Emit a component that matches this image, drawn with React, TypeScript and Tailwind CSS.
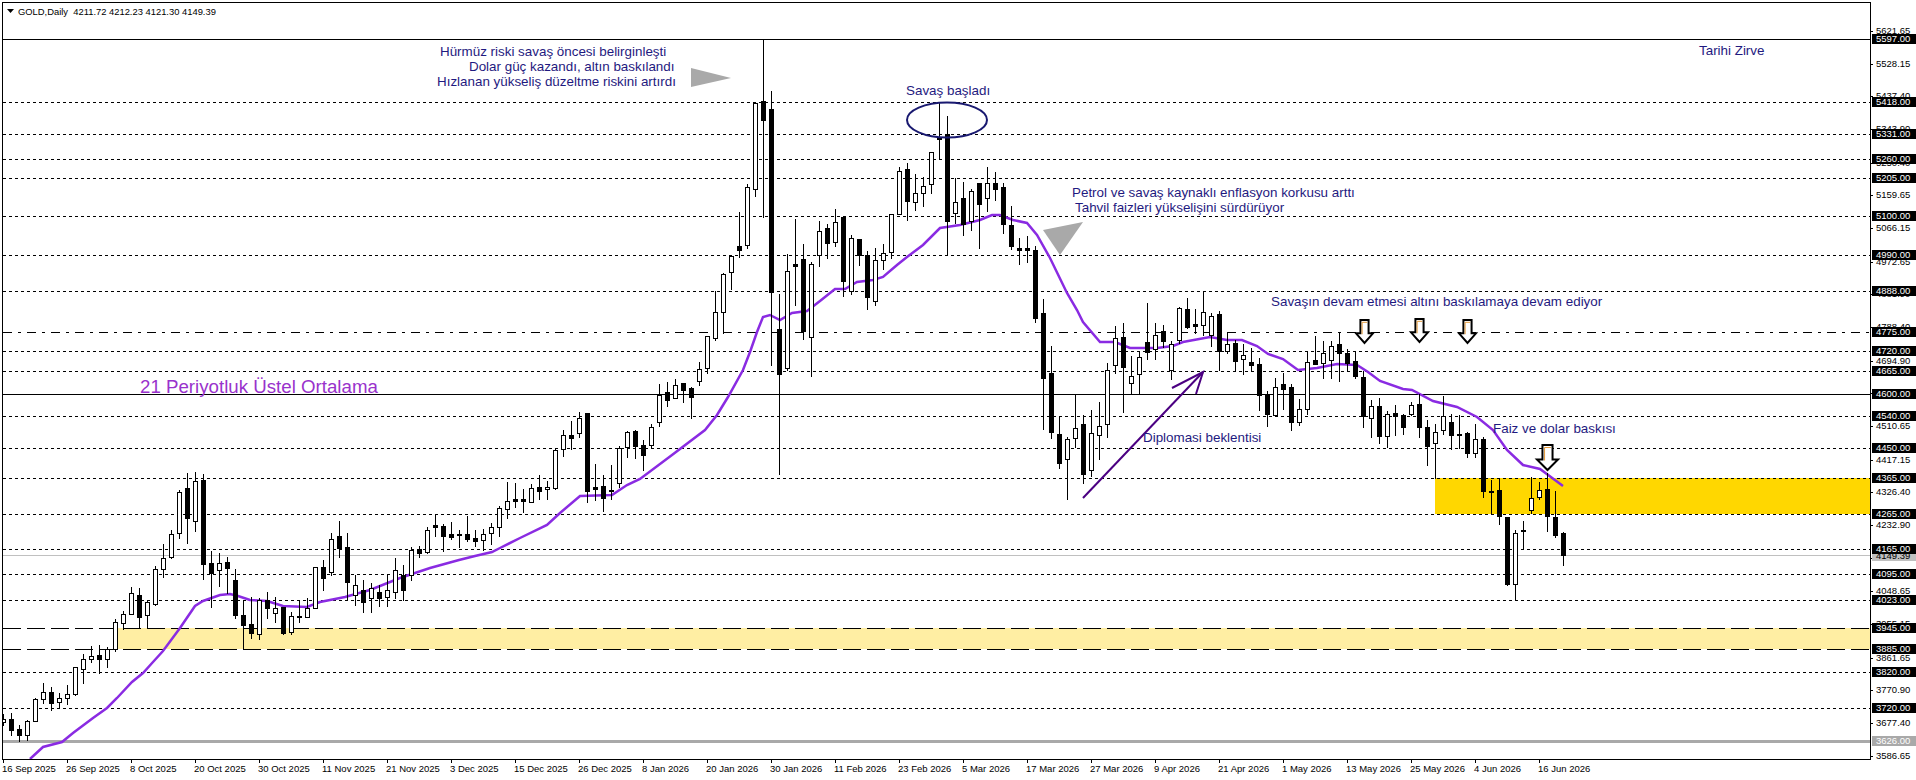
// GOLD daily chart, MT4 look. Everything in the svg is in page pixels.
const FONT = "font-['Liberation_Sans',Arial,sans-serif]";

// [white?, body top, body bottom, wick top, wick bottom]
const candles: number[][] = [
  [1,719,722,714,725],[0,719,730,713,735],[0,729,735,725,741],[1,721,735,720,740],[1,699,721,698,721],
  [1,692,699,683,703],[0,692,703,687,710],[1,698,702,693,708],[1,694,698,685,704],[1,667,694,667,695],
  [1,659,669,654,683],[1,656,659,646,662],[0,655,659,645,673],[1,649,659,647,667],[1,622,649,619,651],
  [1,614,623,611,629],[1,593,614,587,614],[0,595,617,588,628],[1,602,615,600,628],[1,569,604,566,605],
  [1,558,569,544,577],[1,534,557,530,558],[1,492,533,490,538],[0,488,518,473,543],[1,481,521,472,531],
  [0,480,564,474,579],[0,563,573,551,607],[1,563,570,553,586],[0,562,568,557,593],[0,580,615,569,618],
  [0,615,625,600,649],[0,624,633,597,638],[1,600,634,598,639],[0,600,608,592,618],[1,608,613,597,622],
  [0,607,633,607,634],[1,616,632,612,634],[0,616,617,600,622],[1,608,617,598,617],[1,567,608,567,608],
  [0,567,578,560,590],[1,539,572,533,575],[0,536,548,521,557],[0,547,582,533,600],[1,585,595,575,605],
  [0,590,602,580,612],[1,588,598,583,612],[0,592,598,585,606],[1,590,597,575,606],[1,570,592,558,598],
  [0,575,590,565,600],[1,550,575,547,580],[0,549,553,546,557],[1,530,552,527,553],[0,525,527,514,536],
  [0,526,536,524,551],[0,534,537,522,539],[0,534,535,530,547],[0,534,539,516,541],[0,538,541,530,546],
  [1,534,540,529,550],[1,527,533,523,544],[1,508,527,506,536],[1,501,509,482,518],[0,499,501,483,507],
  [0,499,501,489,512],[1,488,502,484,502],[0,487,491,475,499],[1,487,489,481,499],[1,450,488,448,489],
  [1,435,449,430,456],[0,435,438,421,449],[1,418,433,412,437],[0,413,491,413,502],[0,487,489,464,500],
  [0,486,498,475,511],[0,490,491,465,499],[1,448,483,446,487],[1,432,447,431,457],[0,431,446,430,458],
  [0,445,455,440,470],[1,427,445,424,448],[1,395,422,384,426],[0,392,400,382,406],[1,385,398,379,398],
  [0,383,390,383,402],[0,388,397,387,418],[1,369,381,362,385],[1,336,368,336,373],[1,312,338,291,340],
  [1,274,312,273,333],[1,256,272,255,289],[0,246,250,212,257],[1,187,245,184,248],[1,103,189,102,196],
  [0,101,120,39,217],[0,109,292,91,365],[0,329,374,294,474],[1,271,368,254,370],[0,264,266,219,305],
  [0,259,331,244,339],[1,264,337,262,376],[1,231,255,221,266],[0,228,243,224,258],[1,222,242,209,246],
  [0,217,281,217,296],[1,238,291,235,294],[0,239,255,239,265],[0,255,297,251,309],[1,260,301,248,305],
  [1,253,260,244,269],[1,214,252,214,258],[1,171,214,167,214],[0,169,201,163,220],[1,193,202,174,210],
  [1,186,193,177,206],[1,152,184,152,193],[0,137,139,103,159],[0,134,221,116,254],[1,202,213,178,223],
  [0,198,224,182,235],[1,191,221,189,230],[0,183,204,183,248],[1,183,198,167,211],[0,183,189,172,200],
  [0,187,224,183,233],[0,225,246,206,249],[0,248,250,238,264],[0,248,250,236,262],[0,250,318,246,322],
  [0,313,378,299,429],[0,373,432,346,438],[0,434,463,416,468],[1,439,459,437,499],[1,428,438,395,447],
  [0,424,474,415,483],[1,433,470,410,476],[1,426,435,402,459],[1,370,424,363,437],[1,338,365,326,373],
  [0,337,367,323,412],[1,376,383,356,394],[1,357,374,351,393],[0,342,352,303,359],[1,335,349,323,359],
  [0,331,341,325,347],[1,344,370,341,379],[1,308,340,307,343],[0,309,327,298,328],[0,324,326,309,333],
  [1,312,325,291,335],[1,316,335,313,346],[0,314,351,311,370],[1,344,351,332,353],[0,343,361,340,371],
  [1,355,359,344,374],[0,362,365,348,371],[0,364,395,358,410],[0,394,414,391,426],[1,387,415,378,416],
  [0,384,389,373,409],[0,387,422,384,430],[1,409,422,399,425],[1,362,409,351,414],[0,360,364,336,364],
  [1,353,363,341,378],[1,346,360,341,378],[0,344,353,332,381],[0,353,363,349,371],[0,361,376,351,378],
  [0,377,416,371,427],[1,406,418,400,437],[0,406,436,398,443],[1,414,436,411,447],[0,413,416,405,435],
  [0,415,427,414,434],[1,405,414,402,415],[0,404,427,394,437],[0,427,446,420,465],[1,432,443,424,478],
  [1,416,430,396,434],[0,422,435,414,449],[0,434,435,415,448],[0,433,453,432,457],[1,439,453,424,457],
  [0,439,491,437,497],[0,491,492,480,513],[0,490,516,479,524],[0,517,584,517,585],[1,533,584,530,600],
  [0,530,531,521,549],[1,498,510,477,513],[1,490,497,482,499],[0,489,516,473,531],[0,517,535,491,537],
  [0,533,555,532,565],
];

const ema =
  "30,759 43,747 62,742 73,733 93,718 107,708 117,698 132,682 143,673 153,662 163,651 180,628 195,606 203,601 220,595 230,594 238,596 250,600 267,601 283,606 307,607 320,602 345,597 370,590 400,578 430,568 459,560 475,556 492,552 500,548 520,538 547,525 560,513 580,496 612,495 627,485 640,479 672,455 705,430 717,415 728,397 743,370 750,352 757,332 763,317 770,315 780,320 792,313 807,311 820,301 835,289 845,289 857,282 873,280 883,277 897,265 907,257 923,245 940,228 960,225 980,220 992,215 1000,215 1013,220 1027,223 1037,235 1050,258 1067,293 1077,310 1083,322 1100,342 1115,342 1130,348 1157,348 1173,346 1183,342 1210,337 1227,340 1242,340 1257,346 1268,354 1283,359 1298,370 1317,368 1337,364 1357,365 1368,372 1380,381 1403,389 1412,390 1433,401 1457,407 1477,417 1493,430 1507,450 1523,465 1540,469 1563,486";

// price level lines: y, dash pattern
const levels: [number, string][] = [
  [102, "3 3"], [134, "3 3"], [159, "3 3"], [178, "3 3"], [216, "3 3"], [255, "3 3"], [291, "3 3"],
  [332, "9 6 3 6"], [351, "3 3"], [371, "3 3"], [416, "3 3"], [448, "3 3"], [478, "3 3"], [514, "3 3"],
  [549, "3 3"], [574, "3 3"], [600, "3 3"], [628, "18 6"], [649, "18 6"], [672, "3 3"], [708, "3 3"],
];

// right axis, plain scale values first so the level boxes sit on top of them
const scale: [string, number][] = [
  ["5621.65", 31], ["5528.15", 64], ["5437.40", 96], ["5343.90", 129], ["5250.40", 163], ["5159.65", 195],
  ["5066.15", 228], ["4972.65", 262], ["4881.90", 294], ["4788.40", 327], ["4694.90", 361], ["4604.15", 393],
  ["4510.65", 426], ["4417.15", 460], ["4326.40", 492], ["4232.90", 525], ["4142.15", 558], ["4048.65", 591],
  ["3955.15", 624], ["3861.65", 658], ["3770.90", 690], ["3677.40", 723], ["3586.65", 756],
];
const boxes: [string, number][] = [
  ["5597.00", 39], ["5418.00", 102], ["5331.00", 134], ["5260.00", 159], ["5205.00", 178], ["5100.00", 216],
  ["4990.00", 255], ["4888.00", 291], ["4775.00", 332], ["4720.00", 351], ["4665.00", 371], ["4600.00", 394],
  ["4540.00", 416], ["4450.00", 448], ["4365.00", 478], ["4265.00", 514], ["4165.00", 549], ["4095.00", 574],
  ["4023.00", 600], ["3945.00", 628], ["3885.00", 649], ["3820.00", 672], ["3720.00", 708],
];

const dates = [
  "16 Sep 2025", "26 Sep 2025", "8 Oct 2025", "20 Oct 2025", "30 Oct 2025", "11 Nov 2025", "21 Nov 2025",
  "3 Dec 2025", "15 Dec 2025", "26 Dec 2025", "8 Jan 2026", "20 Jan 2026", "30 Jan 2026", "11 Feb 2026",
  "23 Feb 2026", "5 Mar 2026", "17 Mar 2026", "27 Mar 2026", "9 Apr 2026", "21 Apr 2026", "1 May 2026",
  "13 May 2026", "25 May 2026", "4 Jun 2026", "16 Jun 2026",
];

// text notes on the chart: label, left edge, vertical centre
const notes: [string, number, number][] = [
  ["Hürmüz riski savaş öncesi belirginleşti", 440, 52],
  ["Dolar güç kazandı, altın baskılandı", 469, 67],
  ["Hızlanan yükseliş düzeltme riskini artırdı", 437, 82],
  ["Savaş başladı", 906, 91],
  ["Petrol ve savaş kaynaklı enflasyon korkusu arttı", 1072, 193],
  ["Tahvil faizleri yükselişini sürdürüyor", 1075, 208],
  ["Savaşın devam etmesi altını baskılamaya devam ediyor", 1271, 302],
  ["Faiz ve dolar baskısı", 1493, 429],
  ["Diplomasi beklentisi", 1143, 438],
  ["Tarihi Zirve", 1699, 51],
];

function DownArrow({ x, y, w, h }: { x: number; y: number; w: number; h: number }) {
  const p = (a: number, b: number) => `${x + a * w},${y + b * h}`;
  const outline = [p(0.26, 0), p(0.74, 0), p(0.74, 0.58), p(1, 0.58), p(0.5, 1), p(0, 0.58), p(0.26, 0.58)].join(" ");
  const inner = [p(0.36, 0.62), p(0.36, 0.1), p(0.66, 0.1)].join(" ");
  return (
    <g>
      <polygon points={outline} fill="#fff" stroke="#000" strokeWidth="2" />
      <polyline points={inner} fill="none" stroke="#e39a3b" strokeWidth="1" />
    </g>
  );
}

export default function App() {
  return (
    <div className={`w-[1916px] h-[780px] bg-white pl-[2px] pt-[2px] overflow-hidden text-black ${FONT}`}>
      <div className="flex h-[758px]">
        <div className="relative w-[1869px] border border-black">
          <svg className="absolute inset-0 w-full h-full" viewBox="3 3 1867 756">
            <rect x="1435" y="478" width="435" height="36" fill="#ffd700" />
            <rect x="118" y="628" width="1752" height="21" fill="#ffeea3" />

            <g shapeRendering="crispEdges" strokeWidth="1">
              <line x1="3" x2="1870" y1="39.5" y2="39.5" stroke="#000" />
              <line x1="3" x2="1870" y1="394.5" y2="394.5" stroke="#000" />
              <line x1="3" x2="1870" y1="555.5" y2="555.5" stroke="#c0c0c0" />
              <rect x="3" y="740" width="1867" height="3" fill="#a9a9a9" />
              {levels.map(([y, dash]) => (
                <line key={y} x1="3" x2="1870" y1={y + 0.5} y2={y + 0.5} stroke="#000" strokeDasharray={dash} />
              ))}
            </g>

            <polygon points="691,68 731,78 691,87" fill="#a9a9a9" />
            <polygon points="1043,230 1083,222 1060,255" fill="#a9a9a9" />

            <polyline points={ema} fill="none" stroke="#8a2be2" strokeWidth="2.5" />

            <g shapeRendering="crispEdges">
              {candles.map(([white, top, bot, wt, wb], i) => {
                const cx = 3.5 + 8 * i;
                return (
                  <g key={i}>
                    <line x1={cx} x2={cx} y1={wt} y2={wb + 1} stroke="#000" />
                    {white ? (
                      <rect x={cx - 2} y={top + 0.5} width="4" height={bot - top} fill="#fff" stroke="#000" />
                    ) : (
                      <rect x={cx - 2.5} y={top} width="5" height={bot - top + 1} fill="#000" />
                    )}
                  </g>
                );
              })}
            </g>

            <ellipse cx="947" cy="120" rx="40" ry="17.5" fill="none" stroke="#191970" strokeWidth="2" />

            <g fill="none" stroke="#4b0082" strokeWidth="2">
              <line x1="1083" y1="498" x2="1203" y2="372" />
              <polyline points="1172,388 1203,372 1196,394" />
            </g>

            <DownArrow x={1356} y={320} w={17} h={23} />
            <DownArrow x={1411} y={319} w={17} h={23} />
            <DownArrow x={1459} y={320} w={17} h={23} />
            <DownArrow x={1537} y={445} w={21} h={25} />

            <polygon points="7,9 14,9 10.5,13" fill="#000" />
          </svg>

          <span className="absolute left-[15px] top-[3px] text-[9.4px] leading-[11px] whitespace-pre">
            GOLD,Daily  4211.72 4212.23 4121.30 4149.39
          </span>

          {notes.map(([label, x, y]) => (
            <span
              key={label}
              className="absolute text-[13.4px] leading-[16px] text-[#1f1a80] whitespace-nowrap"
              style={{ left: x - 3, top: y - 11 }}
            >
              {label}
            </span>
          ))}

          <span className="absolute left-[137px] top-[373px] text-[18.7px] leading-[22px] text-[#9932cc] whitespace-nowrap">
            21 Periyotluk Üstel Ortalama
          </span>
        </div>

        <div className="relative flex-1 text-[9.5px] leading-[10px]">
          {scale.map(([label, y]) => (
            <div key={label}>
              <div className="absolute left-0 w-[2px] h-px bg-black" style={{ top: y - 2 }} />
              <span className="absolute left-[5px]" style={{ top: y - 7 }}>
                {label}
              </span>
            </div>
          ))}
          <span className="absolute left-[1px] right-0 top-[549px] h-[10px] pl-[4px] bg-[#c0c0c0]">4149.39</span>
          {boxes.map(([label, y]) => (
            <span
              key={label}
              className="absolute left-[1px] right-0 h-[10px] pl-[4px] bg-black text-white"
              style={{ top: y - 7 }}
            >
              {label}
            </span>
          ))}
          <span className="absolute left-[1px] right-0 top-[734px] h-[10px] pl-[4px] bg-[#a9a9a9] text-white">3626.00</span>
        </div>
      </div>

      <div className="relative h-[20px] text-[9.5px] leading-[11px]">
        {dates.map((d, i) => (
          <div key={d}>
            <div className="absolute top-0 w-px h-[3px] bg-black" style={{ left: 1 + 64 * i }} />
            <span className="absolute top-[3px] whitespace-nowrap" style={{ left: 64 * i }}>
              {d}
            </span>
          </div>
        ))}
      </div>
    </div>
  );
}
